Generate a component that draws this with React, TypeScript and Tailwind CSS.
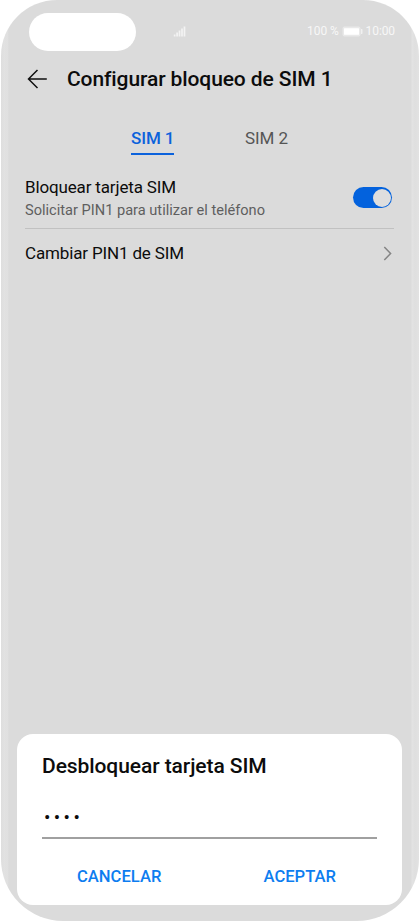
import { useState } from 'react';

const bars = [2, 4, 6, 8, 10];

function SignalIcon() {
  return (
    <svg width="13" height="12" viewBox="0 0 13 12" fill="#f3f3f3">
      {bars.map((h, i) => (
        <rect key={h} x={0.8 + i * 2.45} y={11.5 - h} width="1.7" height={h} />
      ))}
    </svg>
  );
}

function BatteryIcon() {
  return (
    <svg width="21" height="11" viewBox="0 0 21 11">
      <rect x="0.5" y="0.5" width="18" height="10" rx="2" fill="#e9e9e9" />
      <rect x="2" y="2.2" width="15" height="6.6" rx="0.5" fill="#fff" />
      <path d="M19 3h.7c.5 0 .8.3.8.8v3.4c0 .5-.3.8-.8.8H19z" fill="#f0f0f0" />
    </svg>
  );
}

function StatusBar() {
  return (
    <div className="h-[51px] pt-[13px] pl-[29px] pr-[24px] flex items-start">
      <div className="w-[107px] h-[38px] rounded-full bg-white" />
      <div className="ml-[37px] mt-[12px]">
        <SignalIcon />
      </div>
      <div className="ml-auto mt-[12px] h-[12px] flex items-center text-[12px] leading-[12px] text-[#f7f7f7]">
        <span className="tracking-[-0.1px]">100 %</span>
        <span className="ml-[3px] mr-[3px]"><BatteryIcon /></span>
        <span className="tracking-[-0.1px]">10:00</span>
      </div>
    </div>
  );
}

export default function App() {
  const [tab, setTab] = useState(1);
  const [locked, setLocked] = useState(true);
  const [pin, setPin] = useState('0000');

  return (
    <div className="w-[419px] h-[922px] bg-white font-[Roboto,sans-serif] text-[#0c0c0c] overflow-hidden">
      <div className="ml-px w-[418px] h-[921px] rounded-t-[56px] rounded-b-[62px] overflow-hidden bg-[linear-gradient(to_right,#dedede_0,#e2e2e2_4px,#dfdfdf_5px,#e2e2e2_6px,#dbdbdb_8px,#dbdbdb_410px,#e3e3e3_411px,#dfdfdf_414px,#e2e2e2_418px)]">
        <div className="-ml-px w-[419px] h-full flex flex-col">
          <StatusBar />

          <header className="h-[55px] pl-[27px] flex items-center">
            <button type="button" aria-label="Atrás" className="w-[21px] h-[20px]">
              <svg width="21" height="20" viewBox="0 0 21 20" fill="none" stroke="#111" strokeWidth="1.5">
                <path d="M19.8 10H1.8M10.5 1L1.5 10l9 9" />
              </svg>
            </button>
            <h1 className="ml-[19px] pt-px text-[21px] leading-[28px] tracking-[-0.1px] font-medium">Configurar bloqueo de SIM 1</h1>
          </header>

          <div className="h-[49px] pt-[20px] pl-[131px] flex items-start gap-[71px] text-[17px] leading-[24px] tracking-[-0.1px]">
            <button
              type="button" onClick={() => setTab(1)}
              className={`h-[29px] w-[43px] flex items-start whitespace-nowrap ${tab === 1 ? 'font-medium text-[#0b62dc] border-b-2 border-[#0b62dc]' : 'text-[#555]'}`}
            >
              SIM 1
            </button>
            <button
              type="button" onClick={() => setTab(2)}
              className={`h-[29px] w-[44px] flex items-start whitespace-nowrap ${tab === 2 ? 'font-medium text-[#0b62dc] border-b-2 border-[#0b62dc]' : 'text-[#555]'}`}
            >
              SIM 2
            </button>
          </div>

          <div className="mx-[25px] h-[74px] pt-[21px] flex justify-between border-b border-[#c1c1c1]">
            <div>
              <p className="text-[17px] leading-[22px] tracking-[-0.15px]">Bloquear tarjeta SIM</p>
              <p className="mt-[2px] text-[14.6px] leading-[20px] text-[#5f5f5f]">Solicitar PIN1 para utilizar el teléfono</p>
            </div>
            <button
              type="button" role="switch" aria-checked={locked} aria-label="Bloquear tarjeta SIM"
              onClick={() => setLocked(!locked)}
              className={`mt-[11px] mr-[2px] w-[39px] h-[21px] p-[1.5px] rounded-full flex ${locked ? 'justify-end bg-[#0362dd]' : 'justify-start bg-[#aaa]'}`}
            >
              <span className="size-[18px] rounded-full bg-[#dedede]" />
            </button>
          </div>

          <button type="button" className="mx-[25px] h-[49px] flex items-center justify-between text-left">
            <span className="pb-px text-[17px] leading-[22px] tracking-[-0.15px]">Cambiar PIN1 de SIM</span>
            <svg className="mr-[2px]" width="9" height="15" viewBox="0 0 9 15" fill="none" stroke="#858585" strokeWidth="1.5">
              <path d="M1.3 1l6.3 6.5L1.3 14" />
            </svg>
          </button>

          <section className="mt-auto mb-[16px] ml-[17px] w-[385px] h-[171px] rounded-[16px] bg-white px-[25px] pt-[18px]">
            <h2 className="text-[21px] leading-[28px] tracking-[-0.08px] font-medium">Desbloquear tarjeta SIM</h2>
            <div className="mt-[29px] h-[30px] border-b-2 border-[#a0a0a0]">
              <input
                type="text" aria-label="PIN" value={pin.replace(/./g, '•')}
                onChange={(e) => setPin(e.target.value)}
                className="block w-full h-[16px] pl-[2px] text-[19px] leading-[16px] tracking-[3.4px] bg-transparent outline-none"
              />
            </div>
            <div className="pt-[25px] flex text-[16.6px] leading-[26px] font-medium text-[#0d7df0]">
              <button type="button" className="ml-[35px]">CANCELAR</button>
              <button type="button" className="ml-auto mr-[41px]">ACEPTAR</button>
            </div>
          </section>
        </div>
      </div>
    </div>
  );
}
